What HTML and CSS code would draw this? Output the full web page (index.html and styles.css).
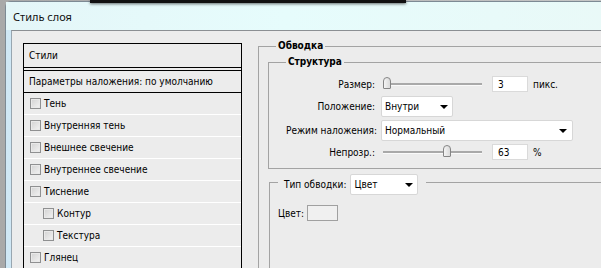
FILE: index.html
```html
<!DOCTYPE html>
<html lang="ru">
<head>
    <meta charset="UTF-8" />
    <title>Стиль слоя</title>
    <link rel="stylesheet" href="styles.css">
</head>
<body>
    <div class="desktop">
        <div class="behind"></div>
        <div class="window">
            <div class="titlebar">Стиль слоя</div>
            <div class="client">
                <div class="styles-list">
                    <div class="list-head">Стили</div>
                    <div class="list-item blend">Параметры наложения: по умолчанию</div>
                    <div class="list-item"><span class="check"></span>Тень</div>
                    <div class="list-item"><span class="check"></span>Внутренняя тень</div>
                    <div class="list-item"><span class="check"></span>Внешнее свечение</div>
                    <div class="list-item"><span class="check"></span>Внутреннее свечение</div>
                    <div class="list-item"><span class="check"></span>Тиснение</div>
                    <div class="list-item sub"><span class="check"></span>Контур</div>
                    <div class="list-item sub"><span class="check"></span>Текстура</div>
                    <div class="list-item"><span class="check"></span>Глянец</div>
                </div>

                <div class="settings">
                    <div class="group stroke">
                        <div class="group-title">Обводка</div>

                        <div class="group structure">
                            <div class="group-title">Структура</div>
                            <div class="row row-size">
                                <span class="label">Размер:</span>
                                <div class="slider"><span class="thumb" style="left: 0px"></span></div>
                                <div class="num">3</div>
                                <span class="unit">пикс.</span>
                            </div>
                            <div class="row row-select">
                                <span class="label">Положение:</span>
                                <div class="select short">Внутри<span class="arrow"></span></div>
                            </div>
                            <div class="row row-select">
                                <span class="label">Режим наложения:</span>
                                <div class="select long">Нормальный<span class="arrow"></span></div>
                            </div>
                            <div class="row row-opacity">
                                <span class="label">Непрозр.:</span>
                                <div class="slider"><span class="thumb" style="left: 60px"></span></div>
                                <div class="num">63</div>
                                <span class="unit">%</span>
                            </div>
                        </div>

                        <div class="group fill">
                            <div class="group-title">
                                <span>Тип обводки:</span>
                                <div class="select type">Цвет<span class="arrow"></span></div>
                            </div>
                            <div class="color-row">
                                <span>Цвет:</span>
                                <span class="swatch"></span>
                            </div>
                        </div>
                    </div>
                </div>
            </div>
        </div>
    </div>
</body>
</html>
```

FILE: styles.css
```css
body {
    margin: 0;
    font-family: Tahoma, "DejaVu Sans Condensed", "DejaVu Sans", sans-serif;
    font-size: 10px;
    color: #000;
}
.desktop {
    position: relative;
    width: 601px;
    height: 268px;
    overflow: hidden;
    background: linear-gradient(90deg, #a9a9a9, #c6c6c6);
}
.behind {
    position: absolute;
    top: 0;
    left: 90px;
    width: 316px;
    height: 3px;
    background: #111;
    box-shadow: 0 1px 3px rgba(0, 0, 0, 0.6);
    z-index: 2;
}
.window {
    margin: 1px 0 0 5px;
    width: 700px;
    height: 300px;
    border: 1px solid #7d8a94;
    border-radius: 6px 0 0 0;
    background: linear-gradient(90deg, #cfe7f5, #dff7fa 30%, #e6fbfb);
    box-sizing: border-box;
}
.titlebar {
    height: 28px;
    line-height: 29px;
    padding-left: 7px;
    font-family: "Segoe UI", "Noto Sans", sans-serif;
    font-size: 11px;
    color: #111;
    background: linear-gradient(90deg, #e4f6f8, #e6fcfc 40%, #eaf8f6);
}
.client {
    margin-left: 5px;
    height: 300px;
    border-top: 1px solid #8b8f93;
    border-left: 1px solid #98a6b0;
    background: #ececec;
    display: flex;
    align-items: flex-start;
    padding: 9px 0 0 11px;
}

/* styles list */
.styles-list {
    width: 217px;
    margin-top: 3px;
    border: 1px solid #000;
    border-bottom: none;
    height: 260px;
    flex-shrink: 0;
}
.list-head {
    height: 23px;
    line-height: 23px;
    padding-left: 5px;
    border-bottom: 1px solid #000;
    margin-bottom: 2px;
}
.list-item {
    display: flex;
    align-items: center;
    height: 21px;
    padding-left: 6px;
    border-bottom: 1px solid #fff;
}
.list-item.blend {
    padding-left: 5px;
    border-top: 1px solid #000;
    border-bottom: 1px solid #000;
}
.list-item.sub {
    padding-left: 19px;
}
.check {
    width: 9px;
    height: 9px;
    margin-right: 3px;
    border: 1px solid #8f9091;
    background: linear-gradient(135deg, #d2d2d2, #f3f3f3);
    box-shadow: inset 0 0 0 1px #e9e9e9;
    flex-shrink: 0;
}

/* right side: group boxes open to the right */
.settings {
    margin-left: 16px;
    margin-top: 6px;
    width: 380px;
    flex: none;
}
.group {
    border-top: 1px solid #a3a3a3;
    border-left: 1px solid #a3a3a3;
}
.group-title {
    width: fit-content;
    margin-top: -8px;
    padding: 0 2px;
    line-height: 14px;
    font-weight: bold;
    background: #ececec;
}
.stroke {
    padding-left: 9px;
    height: 240px;
}
.stroke > .group-title {
    margin-left: 8px;
}
.structure {
    margin-top: 9px;
    padding: 0 0 8px 17px;
    border-bottom: 1px solid #a3a3a3;
}
.structure > .group-title {
    margin-bottom: 6px;
}
.row {
    display: flex;
    align-items: center;
    margin-bottom: 3px;
    white-space: nowrap;
}
.row-size { height: 18px; }
.row-select { height: 21px; }
.row-opacity { height: 16px; margin-bottom: 0; }
.label {
    width: 89px;
    text-align: right;
}
.slider {
    position: relative;
    width: 99px;
    height: 2px;
    margin-left: 8px;
    background: #a9a9a9;
    border-bottom: 1px solid #fafafa;
}
.thumb {
    position: absolute;
    top: -6px;
    width: 6px;
    height: 10px;
    border: 1px solid #858585;
    border-radius: 4px 4px 1px 1px;
    background: linear-gradient(90deg, #f4f4f4, #dadada);
}
.num {
    width: 29px;
    height: 14px;
    line-height: 15px;
    margin-left: 10px;
    padding-left: 5px;
    border: 1px solid #dadada;
    background: #fff;
}
.unit {
    margin-left: 5px;
}
.select {
    position: relative;
    height: 19px;
    line-height: 20px;
    padding-left: 3px;
    border: 1px solid #d7d7d7;
    border-radius: 2px;
    background: #fff;
}
.row .select {
    margin-left: 6px;
}
.select.short { width: 67px; }
.select.long { width: 187px; }
.select.type { width: 63px; font-weight: normal; }
.arrow {
    position: absolute;
    right: 4px;
    top: 8px;
    border-left: 4px solid transparent;
    border-right: 4px solid transparent;
    border-top: 4px solid #000;
}
.select.long .arrow {
    right: 5px;
}
.fill {
    margin: 13px 0 0 1px;
    padding-left: 8px;
    height: 120px;
}
.fill > .group-title {
    display: flex;
    align-items: center;
    gap: 4px;
    margin-top: -9px;
    padding: 0 8px 0 6px;
    font-weight: normal;
    line-height: normal;
}
.color-row {
    display: flex;
    align-items: center;
    gap: 3px;
    margin-top: 10px;
}
.swatch {
    width: 29px;
    height: 14px;
    border: 1px solid #a0a0a0;
    background: #f0f0f0;
}
```
